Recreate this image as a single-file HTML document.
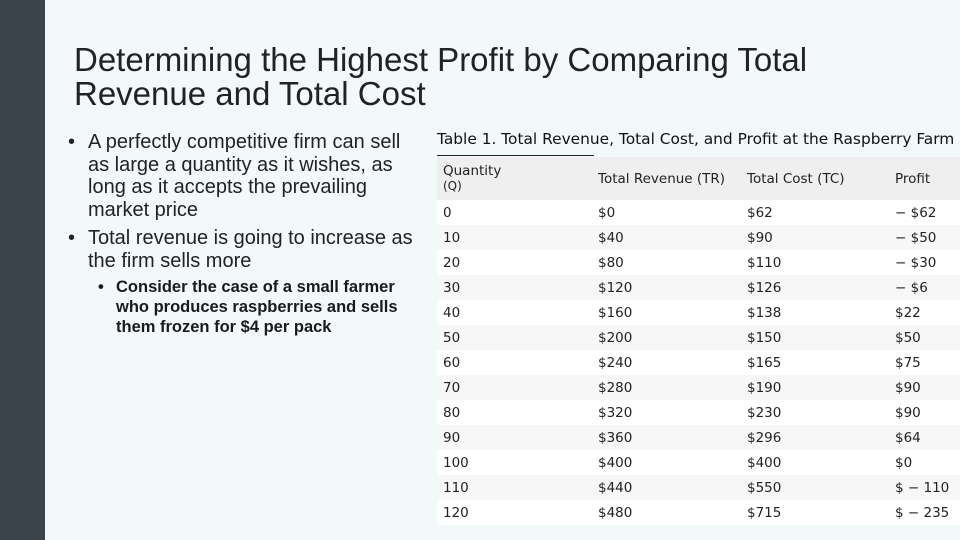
<!DOCTYPE html>
<html><head><style>
body{margin:0;width:960px;height:540px;background:#f3f8fb;position:relative;overflow:hidden;font-family:"Liberation Sans",sans-serif;color:#222}
.side{position:absolute;left:0;top:0;width:45px;height:540px;background:#3b434b}
.title{position:absolute;left:74px;top:43px;font-size:33px;line-height:34px;color:#222}
.b{position:absolute;font-size:20px;line-height:22.5px;white-space:nowrap}
.b .d{position:absolute;left:-20px;top:0}
.s{position:absolute;left:116px;top:277px;font-size:16.5px;line-height:20px;font-weight:bold;color:#1a1a1a;white-space:nowrap}
.cap{position:absolute;left:437px;top:130px;font-family:"DejaVu Sans",sans-serif;font-size:15.4px;color:#111}
.line{position:absolute;left:437px;top:155px;width:157px;height:1px;background:#222}
table{position:absolute;left:437px;top:157px;width:523px;border-collapse:collapse;font-family:"DejaVu Sans",sans-serif;font-size:13.5px;color:#222}
td{height:25px;padding:0 0 0 6px;vertical-align:middle}
tr.h td{height:43px;background:#efefef}
tr:nth-child(even) td{background:#fff}
tr:nth-child(odd):not(.h) td{background:#f7f7f7}
</style></head><body>
<div class="side"></div>
<div class="title">Determining the Highest Profit by Comparing Total<br>Revenue and Total Cost</div>
<div class="b" style="left:88px;top:131px"><span class="d">•</span>A perfectly competitive firm can sell<br>as large a quantity as it wishes, as<br>long as it accepts the prevailing<br>market price</div>
<div class="b" style="left:88px;top:227px"><span class="d">•</span>Total revenue is going to increase as<br>the firm sells more</div>
<div class="s"><span style="position:absolute;left:-18px">•</span>Consider the case of a small farmer<br>who produces raspberries and sells<br>them frozen for $4 per pack</div>
<div class="cap">Table 1. Total Revenue, Total Cost, and Profit at the Raspberry Farm</div>
<div class="line"></div>
<table>
<colgroup><col style="width:155px"><col style="width:149px"><col style="width:148px"><col></colgroup>
<tr class="h"><td style="line-height:15px">Quantity<br><span style="font-size:12px">(Q)</span></td><td>Total Revenue (TR)</td><td>Total Cost (TC)</td><td>Profit</td></tr>
<tr><td>0</td><td>$0</td><td>$62</td><td>− $62</td></tr>
<tr><td>10</td><td>$40</td><td>$90</td><td>− $50</td></tr>
<tr><td>20</td><td>$80</td><td>$110</td><td>− $30</td></tr>
<tr><td>30</td><td>$120</td><td>$126</td><td>− $6</td></tr>
<tr><td>40</td><td>$160</td><td>$138</td><td>$22</td></tr>
<tr><td>50</td><td>$200</td><td>$150</td><td>$50</td></tr>
<tr><td>60</td><td>$240</td><td>$165</td><td>$75</td></tr>
<tr><td>70</td><td>$280</td><td>$190</td><td>$90</td></tr>
<tr><td>80</td><td>$320</td><td>$230</td><td>$90</td></tr>
<tr><td>90</td><td>$360</td><td>$296</td><td>$64</td></tr>
<tr><td>100</td><td>$400</td><td>$400</td><td>$0</td></tr>
<tr><td>110</td><td>$440</td><td>$550</td><td>$ − 110</td></tr>
<tr><td>120</td><td>$480</td><td>$715</td><td>$ − 235</td></tr>
</table>
</body></html>
